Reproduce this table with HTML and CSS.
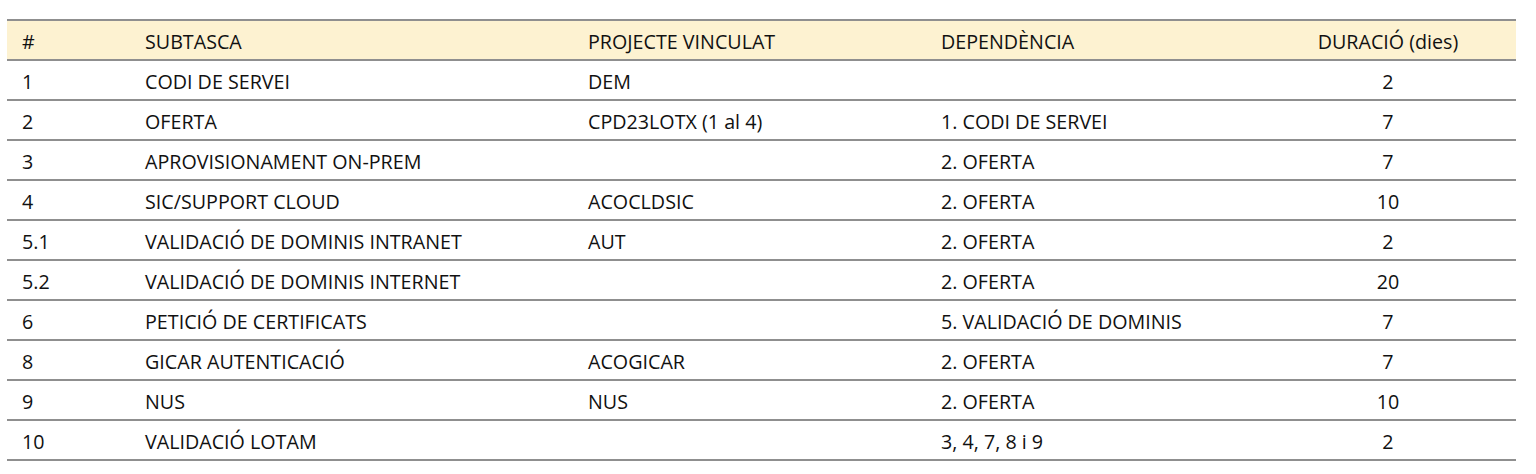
FILE: index.html
```html
<!DOCTYPE html>
<html lang="ca">
<head>
<meta charset="utf-8">
<title>Subtasques</title>
<link rel="stylesheet" href="styles.css">
</head>
<body>
<div class="wrap">
<table class="tasks">
  <colgroup>
    <col class="c-num"><col class="c-sub"><col class="c-proj"><col class="c-dep"><col class="c-dur">
  </colgroup>
  <thead>
    <tr><th>#</th><th>SUBTASCA</th><th>PROJECTE VINCULAT</th><th>DEPENDÈNCIA</th><th class="dur">DURACIÓ (dies)</th></tr>
  </thead>
  <tbody>
    <tr><td>1</td><td>CODI DE SERVEI</td><td>DEM</td><td></td><td class="dur">2</td></tr>
    <tr><td>2</td><td>OFERTA</td><td>CPD23LOTX (1 al 4)</td><td>1. CODI DE SERVEI</td><td class="dur">7</td></tr>
    <tr><td>3</td><td>APROVISIONAMENT ON-PREM</td><td></td><td>2. OFERTA</td><td class="dur">7</td></tr>
    <tr><td>4</td><td>SIC/SUPPORT CLOUD</td><td>ACOCLDSIC</td><td>2. OFERTA</td><td class="dur">10</td></tr>
    <tr><td>5.1</td><td>VALIDACIÓ DE DOMINIS INTRANET</td><td>AUT</td><td>2. OFERTA</td><td class="dur">2</td></tr>
    <tr><td>5.2</td><td>VALIDACIÓ DE DOMINIS INTERNET</td><td></td><td>2. OFERTA</td><td class="dur">20</td></tr>
    <tr><td>6</td><td>PETICIÓ DE CERTIFICATS</td><td></td><td>5. VALIDACIÓ DE DOMINIS</td><td class="dur">7</td></tr>
    <tr><td>8</td><td>GICAR AUTENTICACIÓ</td><td>ACOGICAR</td><td>2. OFERTA</td><td class="dur">7</td></tr>
    <tr><td>9</td><td>NUS</td><td>NUS</td><td>2. OFERTA</td><td class="dur">10</td></tr>
    <tr><td>10</td><td>VALIDACIÓ LOTAM</td><td></td><td>3, 4, 7, 8 i 9</td><td class="dur">2</td></tr>
  </tbody>
</table>
</div>
</body>
</html>
```
FILE: styles.css
```css
html, body {
  margin: 0;
  padding: 0;
  background: #ffffff;
}
body {
  font-family: "Open Sans", "Noto Sans", sans-serif;
  font-size: 19.7px;
  color: #111111;
}
.wrap {
  padding: 19px 20px 0 7px;
}
.tasks {
  width: 1509px;
  border-collapse: collapse;
  table-layout: fixed;
}
.c-num { width: 123px; }
.c-sub { width: 443px; }
.c-proj { width: 353px; }
.c-dep { width: 334px; }
.c-dur { width: 256px; }
.tasks th,
.tasks td {
  height: 40px;
  padding: 3px 0 0 15px;
  box-sizing: border-box;
  text-align: left;
  font-weight: 400;
  vertical-align: middle;
  white-space: nowrap;
  line-height: 24px;
}
.tasks thead tr {
  background: #fdf2d1;
  border-top: 2px solid #8f8f8f;
  border-bottom: 2px solid #8f8f8f;
}
.tasks tbody tr {
  border-bottom: 2px solid #8f8f8f;
}
.tasks .dur {
  text-align: center;
  padding-left: 0;
}
```
